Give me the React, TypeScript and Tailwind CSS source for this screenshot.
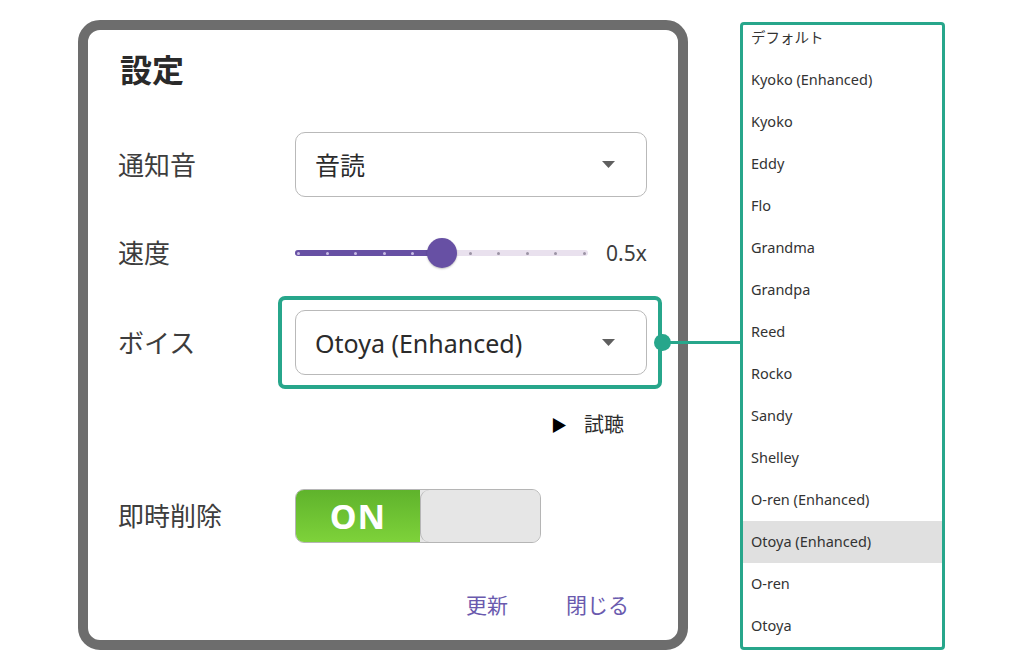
import React from 'react';

const VOICES = [
  'デフォルト',
  'Kyoko (Enhanced)',
  'Kyoko',
  'Eddy',
  'Flo',
  'Grandma',
  'Grandpa',
  'Reed',
  'Rocko',
  'Sandy',
  'Shelley',
  'O-ren (Enhanced)',
  'Otoya (Enhanced)',
  'O-ren',
  'Otoya',
];

const SELECTED = 'Otoya (Enhanced)';

const Caret: React.FC = () => (
  <svg width="13" height="7" viewBox="0 0 13 7" className="shrink-0">
    <path d="M0 0 L13 0 L6.5 7 Z" fill="#5f5f5f" />
  </svg>
);

const Select: React.FC<{ value: string }> = ({ value }) => (
  <div className="h-[65px] w-[352px] rounded-[10px] border border-[#b9b9b9] bg-white flex items-center justify-between pl-[19px] pr-[31px]">
    <span className="text-[25px] leading-[30px] text-[#2b2b2b]">{value}</span>
    <Caret />
  </div>
);

const Slider: React.FC = () => {
  const dots = Array.from({ length: 11 }, (_, i) => i);
  return (
    <div className="relative w-[293px] h-[30px] flex items-center">
      <div className="absolute left-0 right-0 h-[6px] rounded-full bg-[#e9e1ee]" />
      <div className="absolute left-0 w-[147px] h-[6px] rounded-full bg-[#6750a4]" />
      <div className="absolute left-[2px] right-[2px] flex justify-between items-center">
        {dots.map((i) => (
          <span key={i} className={i < 5 ? 'w-[3px] h-[3px] rounded-full bg-[#c9bde6]' : 'w-[3px] h-[3px] rounded-full bg-[#9b93a4]'} />
        ))}
      </div>
      <div className="absolute left-[132px] w-[30px] h-[30px] rounded-full bg-[#6750a4] shadow-[0_1px_2px_rgba(0,0,0,0.25)]" />
    </div>
  );
};

const Toggle: React.FC = () => (
  <div className="flex w-[246px] h-[54px] rounded-[9px] overflow-hidden border border-[#b5b5b5] bg-[#e6e6e6]">
    <div className="w-[124px] h-full bg-gradient-to-b from-[#5fb32c] to-[#7ed23a] flex items-center justify-center">
      <span className="text-white font-bold text-[34px] leading-[34px] tracking-[1px]">ON</span>
    </div>
    <div className="flex-1 h-full rounded-l-[9px] bg-[#e6e6e6] border-l border-[#b5b5b5]" />
  </div>
);

const Label: React.FC<{ children: React.ReactNode }> = ({ children }) => (
  <span className="w-[177px] shrink-0 text-[26px] leading-[26px] text-[#3d3d3d]">{children}</span>
);

export default function App() {
  return (
    <div
      className="relative w-[1024px] h-[672px] bg-white flex items-start overflow-hidden"
      style={{ fontFamily: '"Noto Sans", "Noto Sans CJK JP", sans-serif' }}
    >
      {/* dialog */}
      <div className="mt-[20px] ml-[78px] w-[610px] h-[630px] rounded-[22px] border-[10px] border-[#6d6d6d] bg-white flex flex-col pl-[30px]">
        <h1 className="mt-[24px] ml-[2px] text-[32px] leading-[32px] font-bold text-[#2a2a2a]">設定</h1>

        <div className="mt-[46px] flex items-center">
          <Label>通知音</Label>
          <Select value="音読" />
        </div>

        <div className="mt-[41px] flex items-center h-[30px]">
          <Label>速度</Label>
          <Slider />
          <span className="ml-[18px] text-[21px] leading-[20px] text-[#3d3d3d]">0.5x</span>
        </div>

        <div className="mt-[42px] flex items-center">
          <Label>ボイス</Label>
          <div className="relative">
            <div className="absolute -left-[17px] -right-[15px] -top-[14px] -bottom-[14px] rounded-[7px] border-[4px] border-[#27a68b]" />
            <Select value={SELECTED} />
          </div>
        </div>

        <div className="mt-[40px] flex items-center justify-end pr-[54px] h-[20px]">
          <span className="text-[16px] leading-[16px] text-black mr-[17px]">▶</span>
          <span className="text-[20px] leading-[20px] text-[#2b2b2b]">試聴</span>
        </div>

        <div className="mt-[54px] flex items-center">
          <Label>即時削除</Label>
          <Toggle />
        </div>

        <div className="mt-[52px] flex items-center justify-end pr-[49px] gap-[58px] h-[20px]">
          <button className="text-[21px] leading-[20px] text-[#6a5aae]">更新</button>
          <button className="text-[21px] leading-[20px] text-[#6a5aae]">閉じる</button>
        </div>
      </div>

      {/* voice list */}
      <div className="mt-[22px] ml-[52px] w-[205px] h-[628px] rounded-[4px] border-[3px] border-[#27a68b] bg-white overflow-hidden">
        <div className="-mt-[8px] flex flex-col">
          {VOICES.map((v) => (
            <div
              key={v}
              className={
                v === SELECTED
                  ? 'h-[42px] shrink-0 flex items-center pl-[8px] text-[14.5px] text-[#333] bg-[#e0e0e0]'
                  : 'h-[42px] shrink-0 flex items-center pl-[8px] text-[14.5px] text-[#333]'
              }
            >
              {v}
            </div>
          ))}
        </div>
      </div>

      {/* connector */}
      <div className="absolute left-[662px] top-[341px] w-[78px] h-[3px] bg-[#27a68b]" />
      <div className="absolute left-[654px] top-[334px] w-[17px] h-[17px] rounded-full bg-[#27a68b]" />
    </div>
  );
}
